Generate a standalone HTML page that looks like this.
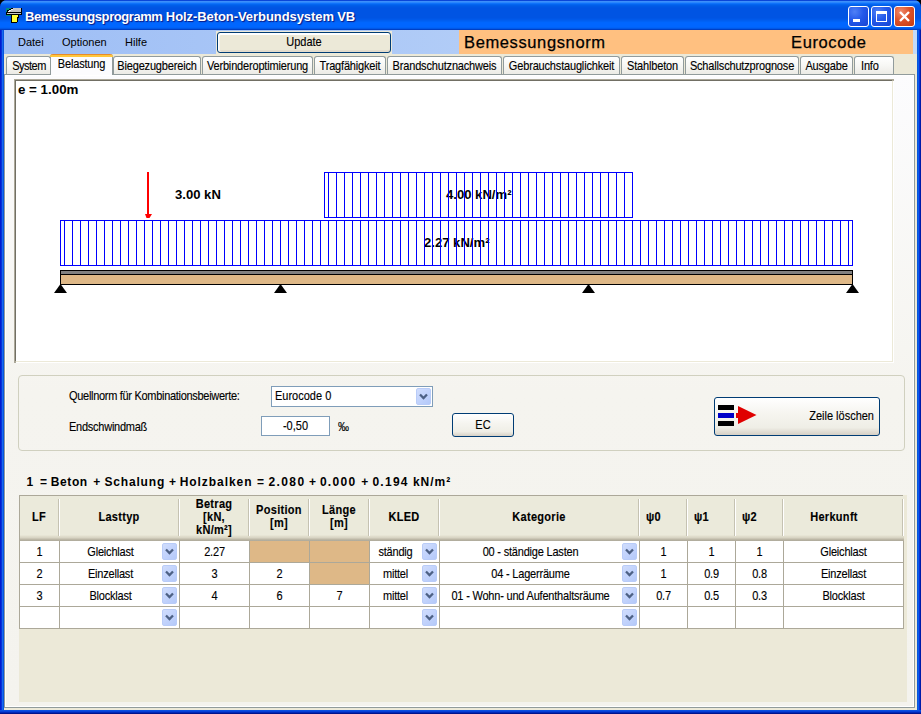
<!DOCTYPE html>
<html lang="de">
<head>
<meta charset="utf-8">
<title>Bemessungsprogramm Holz-Beton-Verbundsystem VB</title>
<style>
*{box-sizing:border-box;margin:0;padding:0}
html,body{width:921px;height:714px;overflow:hidden;background:#000}
body{font-family:"Liberation Sans",sans-serif;font-size:11px;color:#000;position:relative}
.abs{position:absolute}
.s{-webkit-text-stroke:0.12px #000;display:inline-block;line-height:13px;transform:scaleY(1.13);transform-origin:50% 79%;white-space:nowrap;vertical-align:baseline}
#win{position:absolute;left:0;top:0;width:921px;height:714px;background:linear-gradient(to right,#001ccf 0,#001ccf 1px,#0831d9 1px,#0831d9 2px,#166aee 2px,#166aee 3px,#0855dd 3px,#0855dd 918px,#0a5fe8 918px,#0a5fe8 919px,#0831d9 919px,#0831d9 920px,#001ca8 920px);border-radius:7px 7px 0 0;overflow:hidden}
#bot{position:absolute;left:0;top:710px;width:921px;height:4px;background:linear-gradient(to bottom,#0a50e0 0,#0a50e0 1px,#0540d8 1px,#0540d8 2px,#0029b8 2px,#0029b8 3px,#00138c 3px)}
#title{position:absolute;left:0;top:0;width:921px;height:30px;
 background:linear-gradient(to bottom,#0a46d8 0px,#0a46d8 1px,#3c8ffa 1px,#3c8ffa 2px,#2a86fc 2px,#2a86fc 3px,#0f72fa 3px,#0f72fa 4px,#0365f0 4px,#0365f0 5px,#005ee9 5px,#005ee9 6px,#0059e6 6px,#0059e6 7px,#0056e4 7px,#0056e4 8px,#0054e3 8px,#0054e3 9px,#0054e3 9px,#0054e3 10px,#0054e3 10px,#0054e3 11px,#0054e3 11px,#0054e3 12px,#0054e3 12px,#0054e3 13px,#0054e3 13px,#0054e3 14px,#0054e3 14px,#0054e3 15px,#0054e3 15px,#0054e3 16px,#0054e3 16px,#0054e3 17px,#0054e3 17px,#0054e3 18px,#0056e6 18px,#0056e6 19px,#0059ea 19px,#0059ea 20px,#005ef0 20px,#005ef0 21px,#0062f6 21px,#0062f6 22px,#0066fd 22px,#0066fd 23px,#0066ff 23px,#0066ff 24px,#0066ff 24px,#0066ff 25px,#0066ff 25px,#0066ff 26px,#0066ff 26px,#0066ff 27px,#0063f8 27px,#0063f8 28px,#0058e8 28px,#0058e8 29px,#0040c4 29px,#0040c4 30px)}
#ttext{position:absolute;left:25px;top:9px;color:#fff;font-weight:bold;font-size:13px;line-height:16px;white-space:nowrap;text-shadow:1px 1px 1px #0a1883;letter-spacing:-0.27px}
.wb{position:absolute;top:6px;width:21px;height:21px;border:1px solid #fff;border-radius:3px;
 background:radial-gradient(circle at 30% 25%,#4f80f6 0%,#2459ea 45%,#1743d2 100%)}
#bclose{background:radial-gradient(circle at 30% 25%,#f08c6e 0%,#dd5229 45%,#c43a10 100%)}
#client{position:absolute;left:4px;top:30px;width:913px;height:680px;background:#ece9d8}
#menu{position:absolute;left:0;top:0;width:913px;height:24px;background:linear-gradient(to right,#9ebef5,#c4daf9)}
.mi{position:absolute;top:6px;line-height:13px;white-space:nowrap}
.btn{position:absolute;border:1px solid #003c74;border-radius:3px;background:linear-gradient(to bottom,#ffffff 0%,#f6f5f0 40%,#efeee6 80%,#d6d0c5 100%);text-align:center;white-space:nowrap}
#orange{position:absolute;left:455px;top:0;width:454px;height:24px;background:#ffc080;font-size:16.5px;-webkit-text-stroke:0.25px #000}
.tab{position:absolute;top:26px;height:18px;border:1px solid #919b9c;border-bottom:none;border-radius:3px 3px 0 0;background:linear-gradient(to bottom,#ffffff 0%,#f7f7f4 50%,#ecebe6 100%);text-align:center;line-height:18px;white-space:nowrap;font-size:11px;letter-spacing:-0.17px}
.tab.sel{top:24px;height:21px;background:#fcfcfe;border-top:none;padding-top:3px;z-index:3;line-height:14px}
.tab.sel:before{content:'';position:absolute;left:-1px;right:-1px;top:0;height:3px;background:linear-gradient(to bottom,#e68b2c 0,#e68b2c 1px,#ffc73c 1px,#ffc73c 3px);border-radius:3px 3px 0 0}
#page{position:absolute;left:0px;top:44px;width:911px;height:634px;border:1px solid #919b9c;box-shadow:inset 0 0 0 1px #fff;background:linear-gradient(to bottom,#fcfcfe 0%,#f5f4ef 50%,#f4f3ee 100%)}
#canvas{position:absolute;left:11px;top:50px;width:878px;height:282px;background:#fff;border:1px solid;border-color:#716f64 #ece9d8 #ece9d8 #716f64;box-shadow:-1px -1px 0 #aca899,1px 1px 0 #fff,-1px 1px 0 #aca899,1px -1px 0 #aca899}
#grp{position:absolute;left:14px;top:345px;width:887px;height:76px;border:1px solid #d0d0bf;border-radius:4px}
.lbl{position:absolute;white-space:nowrap;line-height:13px}
#sum span{position:absolute;top:0}
#grid{position:absolute;left:15px;top:465px;width:888px;height:207px;background:#ece9d8;padding-left:1px}
#grid:before{content:'';position:absolute;left:0;top:0;width:884px;height:1px;background:#aca899}
#gi{position:absolute;left:1px;top:1px}
#grid:after{content:'';position:absolute;left:0;top:0;width:1px;height:134px;background:#aca899}
.hd{position:absolute;top:0;height:45px;background:linear-gradient(to bottom,#ebeadb 0,#ebeadb 39px,#e3e0cf 40px,#d6d2c2 42px,#c1bcaa 43px,#aca899 45px);font-weight:bold;font-size:11px;text-align:center;display:flex;align-items:center;justify-content:center;line-height:12px;letter-spacing:0.3px;padding-bottom:1px}
.hd i{position:absolute;right:0;top:3px;height:37px;width:2px;border-left:1px solid #c5c2b2;border-right:1px solid #fff}
.c{position:absolute;height:22px;background:#fff;border-right:1px solid #aca899;border-bottom:1px solid #aca899;text-align:center;line-height:23px;white-space:nowrap;overflow:hidden;letter-spacing:-0.2px}
.cb{padding-right:18px}
.tan{background:#deb887}
.dd{position:absolute;right:2px;top:2px;width:15px;height:17px;border-radius:2px;border:1px solid #b9ccf8;background:linear-gradient(135deg,#d0ddfd 0%,#c2d3fc 50%,#b4c9f9 100%)}
.dd svg{position:absolute;left:2px;top:4px}
</style>
</head>
<body>
<div id="win">
 <div id="title">
  <svg class="abs" style="left:6px;top:8px" width="16" height="16" viewBox="0 0 16 16" shape-rendering="crispEdges">
   <rect x="0" y="0" width="5" height="1" fill="#008c84"/><rect x="5" y="0" width="2" height="1" fill="#000"/><rect x="7" y="0" width="8" height="1" fill="#c3c3c3"/><rect x="15" y="0" width="1" height="1" fill="#000"/><rect x="0" y="1" width="3" height="1" fill="#008c84"/><rect x="3" y="1" width="2" height="1" fill="#000"/><rect x="5" y="1" width="2" height="1" fill="#efefef"/><rect x="7" y="1" width="8" height="1" fill="#c3c3c3"/><rect x="15" y="1" width="1" height="1" fill="#000"/><rect x="0" y="2" width="1" height="1" fill="#008c84"/><rect x="1" y="2" width="2" height="1" fill="#000"/><rect x="3" y="2" width="2" height="1" fill="#efefef"/><rect x="5" y="2" width="10" height="1" fill="#c3c3c3"/><rect x="15" y="2" width="1" height="1" fill="#000"/><rect x="0" y="3" width="1" height="1" fill="#008c84"/><rect x="1" y="3" width="1" height="1" fill="#000"/><rect x="2" y="3" width="2" height="1" fill="#efefef"/><rect x="4" y="3" width="11" height="1" fill="#c3c3c3"/><rect x="15" y="3" width="1" height="1" fill="#000"/><rect x="0" y="4" width="16" height="1" fill="#000"/><rect x="0" y="5" width="1" height="1" fill="#000"/><rect x="1" y="5" width="14" height="1" fill="#c8c8c8"/><rect x="15" y="5" width="1" height="1" fill="#000"/><rect x="0" y="6" width="16" height="1" fill="#000"/><rect x="0" y="7" width="5" height="1" fill="#008c84"/><rect x="5" y="7" width="1" height="1" fill="#000"/><rect x="6" y="7" width="6" height="1" fill="#ffff33"/><rect x="12" y="7" width="1" height="1" fill="#000"/><rect x="5" y="8" width="1" height="1" fill="#000"/><rect x="6" y="8" width="6" height="1" fill="#ffff33"/><rect x="12" y="8" width="1" height="1" fill="#000"/><rect x="5" y="9" width="1" height="1" fill="#000"/><rect x="6" y="9" width="5" height="1" fill="#ffff33"/><rect x="11" y="9" width="2" height="1" fill="#000"/><rect x="5" y="10" width="1" height="1" fill="#000"/><rect x="6" y="10" width="5" height="1" fill="#ffff33"/><rect x="11" y="10" width="1" height="1" fill="#000"/><rect x="5" y="11" width="1" height="1" fill="#000"/><rect x="6" y="11" width="5" height="1" fill="#ffff33"/><rect x="11" y="11" width="1" height="1" fill="#000"/><rect x="5" y="12" width="1" height="1" fill="#000"/><rect x="6" y="12" width="5" height="1" fill="#ffff33"/><rect x="11" y="12" width="1" height="1" fill="#000"/><rect x="5" y="13" width="1" height="1" fill="#000"/><rect x="6" y="13" width="5" height="1" fill="#ffff33"/><rect x="11" y="13" width="1" height="1" fill="#000"/><rect x="5" y="14" width="6" height="1" fill="#000"/>
  </svg>
  <div id="ttext"><span style="letter-spacing:-0.43px">Bemessungsprogramm</span> <span style="letter-spacing:-0.07px">Holz-Beton-Verbundsystem</span> VB</div>
  <div class="wb" style="left:848px"><svg width="19" height="19"><rect x="4" y="12" width="7" height="3" fill="#fff"/></svg></div>
  <div class="wb" style="left:871px"><svg width="19" height="19"><rect x="4.5" y="4.5" width="10" height="10" fill="none" stroke="#fff" stroke-width="1"/><rect x="4" y="4" width="11" height="3" fill="#fff"/></svg></div>
  <div class="wb" id="bclose" style="left:894px"><svg width="19" height="19"><path d="M5 5 L14 14 M14 5 L5 14" stroke="#fff" stroke-width="2.4"/></svg></div>
 </div>
 <div id="client">
  <div id="menu">
   <div class="mi" style="left:14px">Datei</div>
   <div class="mi" style="left:58px">Optionen</div>
   <div class="mi" style="left:121px">Hilfe</div>
  </div>
  <div class="abs" style="left:212px;top:1px;width:176px;height:23px;background:#ece9d8"></div>
  <div class="btn" style="left:213px;top:2px;width:174px;height:21px;line-height:19px;background:#ece9d8;box-shadow:inset 1px 2px 0 #fff,inset 2px 0 0 #f6f4ec,inset 0 -2px 0 #e3dccd"><span class="s">Update</span></div>
  <div id="orange">
   <span class="abs" id="bn" style="left:5px;top:3px;line-height:18px;letter-spacing:0.62px">Bemessungsnorm</span>
   <span class="abs" id="ec" style="left:332px;top:3px;line-height:18px;letter-spacing:0.62px">Eurocode</span>
  </div>
  <div class="tab" style="left:2px;width:45px;letter-spacing:-0.5px;padding-left:1px"><span class="s">System</span></div>
  <div class="tab sel" style="left:46px;width:63px"><span class="s">Belastung</span></div>
  <div class="tab" style="left:109px;width:88px"><span class="s">Biegezugbereich</span></div>
  <div class="tab" style="left:198px;width:111px"><span class="s">Verbinderoptimierung</span></div>
  <div class="tab" style="left:310px;width:72px"><span class="s">Tragfähigkeit</span></div>
  <div class="tab" style="left:383px;width:115px"><span class="s">Brandschutznachweis</span></div>
  <div class="tab" style="left:499px;width:117px"><span class="s">Gebrauchstauglichkeit</span></div>
  <div class="tab" style="left:617px;width:63px"><span class="s">Stahlbeton</span></div>
  <div class="tab" style="left:681px;width:114px"><span class="s">Schallschutzprognose</span></div>
  <div class="tab" style="left:796px;width:53px"><span class="s">Ausgabe</span></div>
  <div class="tab" style="left:850px;width:40px;text-align:left;padding-left:6px"><span class="s">Info</span></div>
  <div id="page"></div>
  <div id="canvas">
   <svg class="abs" style="left:-1px;top:-1px" width="877" height="281" viewBox="15 80 877 281" shape-rendering="crispEdges">
    <defs>
     <pattern id="h" x="0" y="0" width="8" height="8" patternUnits="userSpaceOnUse"><rect x="0" y="0" width="1" height="8" fill="#0000ff"/></pattern>
    </defs>
    <text x="18" y="94" font-family="Liberation Sans, sans-serif" font-weight="bold" font-size="13.33" fill="#000">e = 1.00m</text>
    <text x="446" y="199" font-family="Liberation Sans, sans-serif" font-weight="bold" font-size="13.1">4.00 kN/m²</text>
    <text x="424" y="247" font-family="Liberation Sans, sans-serif" font-weight="bold" font-size="13.1">2.27 kN/m²</text>
    <rect x="324" y="172" width="309" height="46" fill="url(#h)"/>
    <rect x="324.5" y="172.5" width="308" height="45" fill="none" stroke="#0000ff"/>
    <rect x="60" y="220" width="793" height="46" fill="url(#h)"/>
    <rect x="60.5" y="220.5" width="792" height="45" fill="none" stroke="#0000ff"/>
    <text x="175" y="199" font-family="Liberation Sans, sans-serif" font-weight="bold" font-size="13.1">3.00 kN</text>
    <rect x="147" y="172" width="2" height="45" fill="#ff0000"/>
    <polygon points="145,214 152,214 149.5,218 146.5,218" fill="#ff0000" shape-rendering="auto"/>
    <rect x="60.5" y="270.5" width="792" height="4" fill="#808080" stroke="#000"/>
    <rect x="60.5" y="274.5" width="792" height="10" fill="#deb887" stroke="#000"/>
    <g shape-rendering="auto" fill="#000">
     <polygon points="60.5,284 54,293 67,293"/>
     <polygon points="280.5,284 274,293 287,293"/>
     <polygon points="588.5,284 582,293 595,293"/>
     <polygon points="852.5,284 846,293 859,293"/>
    </g>
   </svg>
  </div>
  <div id="grp"></div>
  <div class="lbl" style="left:65px;top:360px;letter-spacing:-0.3px"><span class="s">Quellnorm für Kombinationsbeiwerte:</span></div>
  <div class="lbl" style="left:65px;top:391px;letter-spacing:-0.25px"><span class="s">Endschwindmaß</span></div>
  <div class="abs" style="left:267px;top:356px;width:162px;height:21px;background:#fff;border:1px solid #7f9db9">
   <span class="abs" style="left:3px;top:3px;line-height:13px"><span class="s">Eurocode 0</span></span>
   <div class="dd" style="right:1px;top:1px"><svg width="9" height="8" viewBox="0 0 9 8"><path d="M1 1.5 L4.5 5 L8 1.5" fill="none" stroke="#4d6185" stroke-width="2.3"/></svg></div>
  </div>
  <div class="abs" style="left:257px;top:386px;width:69px;height:20px;background:#fff;border:1px solid #7f9db9;text-align:center;line-height:18px"><span class="s">-0,50</span></div>
  <div class="lbl" style="left:334px;top:391px"><span class="s">‰</span></div>
  <div class="btn" style="left:448px;top:383px;width:62px;height:24px;line-height:22px"><span class="s">EC</span></div>
  <div class="btn" style="left:710px;top:367px;width:166px;height:39px;line-height:37px;text-align:right;padding-right:5px"><span class="s">Zeile löschen</span>
   <svg class="abs" style="left:3px;top:6px" width="40" height="23" viewBox="718 404 40 23">
    <rect x="718" y="405" width="16" height="5" fill="#000"/>
    <rect x="718" y="413" width="16" height="5" fill="#0000c8"/>
    <rect x="718" y="421" width="16" height="5" fill="#000"/>
    <rect x="736" y="413" width="3" height="5" fill="#e00000"/>
    <polygon points="738,406 756.5,415 738,424" fill="#e00000"/>
   </svg>
  </div>
  <div class="lbl" id="sum" style="left:0;top:446px;width:460px;height:13px;font-weight:bold;font-size:12px"><span style="left:22.6px">1</span> <span style="left:36.0px">=</span> <span style="left:46.8px;letter-spacing:0.60px">Beton</span> <span style="left:89.2px">+</span> <span style="left:100.4px;letter-spacing:0.84px">Schalung</span> <span style="left:164.9px">+</span> <span style="left:175.7px;letter-spacing:0.94px">Holzbalken</span> <span style="left:253.0px">=</span> <span style="left:264.4px;letter-spacing:1.42px">2.080</span> <span style="left:304.9px">+</span> <span style="left:315.9px;letter-spacing:1.29px">0.000</span> <span style="left:357.2px">+</span> <span style="left:368.4px;letter-spacing:1.27px">0.194</span> <span style="left:408.9px;letter-spacing:1.01px">kN/m²</span></div>
  <div id="grid"><div id="gi">
   <div class="hd" style="left:0px;width:40px;padding-right:2px"><span class="s" style="line-height:11.5px;text-align:center">LF</span><i></i></div>
   <div class="hd" style="left:40px;width:120px;padding-right:2px"><span class="s" style="line-height:11.5px;text-align:center">Lasttyp</span><i></i></div>
   <div class="hd" style="left:160px;width:70px;padding-right:2px"><span class="s" style="line-height:11.5px;text-align:center">Betrag<br>[kN,<br>kN/m²]</span><i></i></div>
   <div class="hd" style="left:230px;width:60px;padding-bottom:3px;padding-right:2px"><span class="s" style="line-height:11.5px;text-align:center">Position<br>[m]</span><i></i></div>
   <div class="hd" style="left:290px;width:60px;padding-bottom:3px;padding-right:2px"><span class="s" style="line-height:11.5px;text-align:center">Länge<br>[m]</span><i></i></div>
   <div class="hd" style="left:350px;width:70px;padding-right:2px"><span class="s" style="line-height:11.5px;text-align:center">KLED</span><i></i></div>
   <div class="hd" style="left:420px;width:200px;padding-right:2px"><span class="s" style="line-height:11.5px;text-align:center">Kategorie</span><i></i></div>
   <div class="hd" style="left:620px;width:48px;justify-content:flex-start;padding-left:6px"><span class="s" style="line-height:11.5px;text-align:center">ψ0</span><i></i></div>
   <div class="hd" style="left:668px;width:48px;justify-content:flex-start;padding-left:6px"><span class="s" style="line-height:11.5px;text-align:center">ψ1</span><i></i></div>
   <div class="hd" style="left:716px;width:48px;justify-content:flex-start;padding-left:6px"><span class="s" style="line-height:11.5px;text-align:center">ψ2</span><i></i></div>
   <div class="hd" style="left:764px;width:120px;padding-right:20px"><span class="s" style="line-height:11.5px;text-align:center">Herkunft</span><i></i></div>
   <div class="c" style="left:0px;top:45px;width:40px"><span class="s">1</span></div>
   <div class="c cb" style="left:40px;top:45px;width:120px"><span class="s">Gleichlast</span><span class="dd"><svg width="9" height="8" viewBox="0 0 9 8"><path d="M1 1.5 L4.5 5 L8 1.5" fill="none" stroke="#4d6185" stroke-width="2.3"/></svg></span></div>
   <div class="c" style="left:160px;top:45px;width:70px"><span class="s">2.27</span></div>
   <div class="c tan" style="left:230px;top:45px;width:60px"></div>
   <div class="c tan" style="left:290px;top:45px;width:60px"></div>
   <div class="c cb" style="left:350px;top:45px;width:70px"><span class="s">ständig</span><span class="dd"><svg width="9" height="8" viewBox="0 0 9 8"><path d="M1 1.5 L4.5 5 L8 1.5" fill="none" stroke="#4d6185" stroke-width="2.3"/></svg></span></div>
   <div class="c cb" style="left:420px;top:45px;width:200px"><span class="s">00 - ständige Lasten</span><span class="dd"><svg width="9" height="8" viewBox="0 0 9 8"><path d="M1 1.5 L4.5 5 L8 1.5" fill="none" stroke="#4d6185" stroke-width="2.3"/></svg></span></div>
   <div class="c" style="left:620px;top:45px;width:48px"><span class="s">1</span></div>
   <div class="c" style="left:668px;top:45px;width:48px"><span class="s">1</span></div>
   <div class="c" style="left:716px;top:45px;width:48px"><span class="s">1</span></div>
   <div class="c" style="left:764px;top:45px;width:120px"><span class="s">Gleichlast</span></div>
   <div class="c" style="left:0px;top:67px;width:40px"><span class="s">2</span></div>
   <div class="c cb" style="left:40px;top:67px;width:120px"><span class="s">Einzellast</span><span class="dd"><svg width="9" height="8" viewBox="0 0 9 8"><path d="M1 1.5 L4.5 5 L8 1.5" fill="none" stroke="#4d6185" stroke-width="2.3"/></svg></span></div>
   <div class="c" style="left:160px;top:67px;width:70px"><span class="s">3</span></div>
   <div class="c" style="left:230px;top:67px;width:60px"><span class="s">2</span></div>
   <div class="c tan" style="left:290px;top:67px;width:60px"></div>
   <div class="c cb" style="left:350px;top:67px;width:70px"><span class="s">mittel</span><span class="dd"><svg width="9" height="8" viewBox="0 0 9 8"><path d="M1 1.5 L4.5 5 L8 1.5" fill="none" stroke="#4d6185" stroke-width="2.3"/></svg></span></div>
   <div class="c cb" style="left:420px;top:67px;width:200px"><span class="s">04 - Lagerräume</span><span class="dd"><svg width="9" height="8" viewBox="0 0 9 8"><path d="M1 1.5 L4.5 5 L8 1.5" fill="none" stroke="#4d6185" stroke-width="2.3"/></svg></span></div>
   <div class="c" style="left:620px;top:67px;width:48px"><span class="s">1</span></div>
   <div class="c" style="left:668px;top:67px;width:48px"><span class="s">0.9</span></div>
   <div class="c" style="left:716px;top:67px;width:48px"><span class="s">0.8</span></div>
   <div class="c" style="left:764px;top:67px;width:120px"><span class="s">Einzellast</span></div>
   <div class="c" style="left:0px;top:89px;width:40px"><span class="s">3</span></div>
   <div class="c cb" style="left:40px;top:89px;width:120px"><span class="s">Blocklast</span><span class="dd"><svg width="9" height="8" viewBox="0 0 9 8"><path d="M1 1.5 L4.5 5 L8 1.5" fill="none" stroke="#4d6185" stroke-width="2.3"/></svg></span></div>
   <div class="c" style="left:160px;top:89px;width:70px"><span class="s">4</span></div>
   <div class="c" style="left:230px;top:89px;width:60px"><span class="s">6</span></div>
   <div class="c" style="left:290px;top:89px;width:60px"><span class="s">7</span></div>
   <div class="c cb" style="left:350px;top:89px;width:70px"><span class="s">mittel</span><span class="dd"><svg width="9" height="8" viewBox="0 0 9 8"><path d="M1 1.5 L4.5 5 L8 1.5" fill="none" stroke="#4d6185" stroke-width="2.3"/></svg></span></div>
   <div class="c cb" style="left:420px;top:89px;width:200px"><span class="s">01 - Wohn- und Aufenthaltsräume</span><span class="dd"><svg width="9" height="8" viewBox="0 0 9 8"><path d="M1 1.5 L4.5 5 L8 1.5" fill="none" stroke="#4d6185" stroke-width="2.3"/></svg></span></div>
   <div class="c" style="left:620px;top:89px;width:48px"><span class="s">0.7</span></div>
   <div class="c" style="left:668px;top:89px;width:48px"><span class="s">0.5</span></div>
   <div class="c" style="left:716px;top:89px;width:48px"><span class="s">0.3</span></div>
   <div class="c" style="left:764px;top:89px;width:120px"><span class="s">Blocklast</span></div>
   <div class="c" style="left:0px;top:111px;width:40px"></div>
   <div class="c cb" style="left:40px;top:111px;width:120px"><span class="dd"><svg width="9" height="8" viewBox="0 0 9 8"><path d="M1 1.5 L4.5 5 L8 1.5" fill="none" stroke="#4d6185" stroke-width="2.3"/></svg></span></div>
   <div class="c" style="left:160px;top:111px;width:70px"></div>
   <div class="c" style="left:230px;top:111px;width:60px"></div>
   <div class="c" style="left:290px;top:111px;width:60px"></div>
   <div class="c cb" style="left:350px;top:111px;width:70px"><span class="dd"><svg width="9" height="8" viewBox="0 0 9 8"><path d="M1 1.5 L4.5 5 L8 1.5" fill="none" stroke="#4d6185" stroke-width="2.3"/></svg></span></div>
   <div class="c cb" style="left:420px;top:111px;width:200px"><span class="dd"><svg width="9" height="8" viewBox="0 0 9 8"><path d="M1 1.5 L4.5 5 L8 1.5" fill="none" stroke="#4d6185" stroke-width="2.3"/></svg></span></div>
   <div class="c" style="left:620px;top:111px;width:48px"></div>
   <div class="c" style="left:668px;top:111px;width:48px"></div>
   <div class="c" style="left:716px;top:111px;width:48px"></div>
   <div class="c" style="left:764px;top:111px;width:120px"></div>
  </div></div>
 </div>
 <div id="bot"></div>
</div>
</body>
</html>
